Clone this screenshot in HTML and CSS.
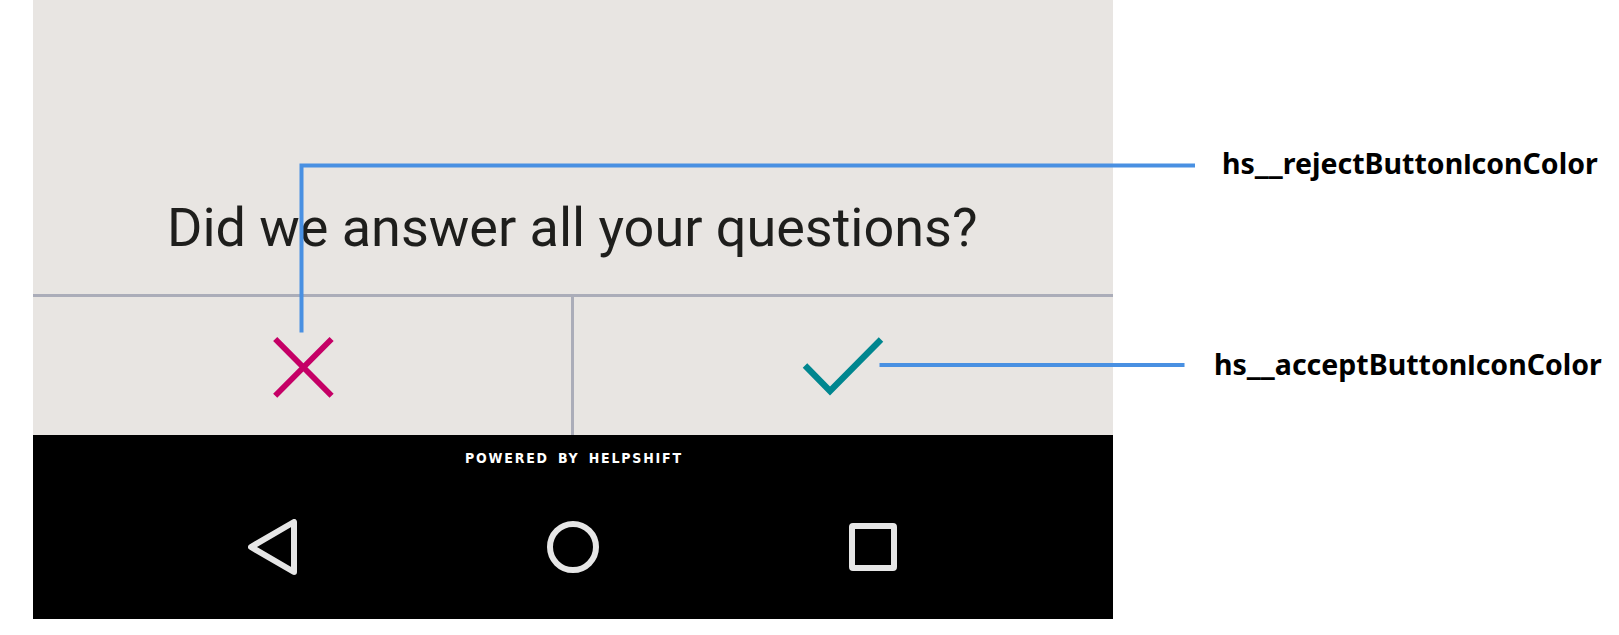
FILE: index.html
```html
<!DOCTYPE html>
<html lang="en">
<head>
<meta charset="utf-8">
<title>Button icon colors</title>
<link rel="stylesheet" href="styles.css">
</head>
<body>
<main class="figure">
  <section class="phone">
    <div class="prompt"><p class="question">Did we answer all your questions?</p></div>
    <div class="actions">
      <button class="action reject" aria-label="Reject">
        <svg width="64" height="64" viewBox="0 0 64 64"><path d="M4.2 4L60.6 60.8M60.6 4L4.2 60.8"/></svg>
      </button>
      <button class="action accept" aria-label="Accept">
        <svg width="82" height="60" viewBox="0 0 82 60"><path d="M3 28.5L28 54L79 2.5"/></svg>
      </button>
    </div>
    <footer class="powered"><span>POWERED BY HELPSHIFT</span></footer>
    <nav class="navbar">
      <svg class="nav-back" width="50" height="56" viewBox="0 0 50 56"><path d="M46 3V53L3 28Z"/></svg>
      <svg class="nav-home" width="52" height="52" viewBox="0 0 52 52"><circle cx="26" cy="26" r="23"/></svg>
      <span class="nav-recent"></span>
    </nav>
  </section>
  <aside class="labels">
    <p class="label label-reject">hs<span class="bar">__</span>rejectButton<span class="plain">I</span>conColor</p>
    <p class="label label-accept">hs<span class="bar">__</span>acceptButton<span class="plain">I</span>conColor</p>
  </aside>
  <svg class="connectors" width="1619" height="635" viewBox="0 0 1619 635">
    <path d="M301.5 332.5V165.5H1195"/>
    <path d="M879.5 365H1184.5"/>
  </svg>
</main>
</body>
</html>
```
FILE: styles.css
```css
* { box-sizing: border-box; }
body { margin: 0; background: #fff; }
p { margin: 0; white-space: nowrap; }
.figure {
  position: relative;
  display: flex;
  width: 1619px;
  height: 635px;
  padding-left: 33px;
  overflow: hidden;
}
.phone {
  display: flex;
  flex-direction: column;
  width: 1080px;
  height: 619px;
  background: #000;
}
.prompt {
  height: 297px;
  padding: 196px 0 0 134px;
  background: #e8e5e2;
  border-bottom: 3px solid #abadb9;
}
.question {
  font: 400 54px/64px Roboto, sans-serif;
  word-spacing: -0.15px;
  color: #1e1e1c;
}
.actions {
  display: flex;
  height: 138px;
  background: #e8e5e2;
}
.action {
  display: flex;
  align-items: flex-start;
  padding: 0;
  border: 0;
  background: none;
}
.action svg { display: block; fill: none; }
.reject {
  width: 541px;
  padding: 38px 0 0 238px;
  border-right: 3px solid #abadb9;
  stroke: #c50066;
  stroke-width: 5.8;
}
.accept {
  flex: 1;
  padding: 40px 0 0 228px;
  stroke: #00868f;
  stroke-width: 6.3;
}
.powered {
  height: 46px;
  padding: 15px 0 0 432px;
  font: 700 14px/16px "DejaVu Sans", sans-serif;
  font-stretch: condensed;
  letter-spacing: 1.8px;
  word-spacing: 3px;
  color: #fff;
  white-space: nowrap;
}
.navbar {
  display: flex;
  align-items: center;
  height: 132px;
  padding-left: 215px;
}
.navbar svg {
  fill: none;
  stroke: #e6e6e6;
  stroke-width: 6;
  stroke-linejoin: round;
}
.nav-home { margin-left: 249px; }
.nav-recent {
  width: 48px;
  height: 48px;
  margin-left: 250px;
  border: 6px solid #e6e6e6;
  border-radius: 4px;
}
.labels {
  display: flex;
  flex-direction: column;
  gap: 161px;
  padding: 143px 0 0 101px;
}
.label {
  height: 40px;
  font: 700 28.5px/40px "Noto Sans", sans-serif;
  color: #000;
}
.label-reject { margin-left: 8px; }
.bar {
  font: 700 28px/1 "DejaVu Sans", sans-serif;
  vertical-align: 2px;
}
.plain {
  font: 700 30px/1 "Liberation Sans", sans-serif;
}
.connectors {
  position: absolute;
  inset: 0;
  fill: none;
  stroke: #4990e2;
  stroke-width: 4;
  pointer-events: none;
}
```
